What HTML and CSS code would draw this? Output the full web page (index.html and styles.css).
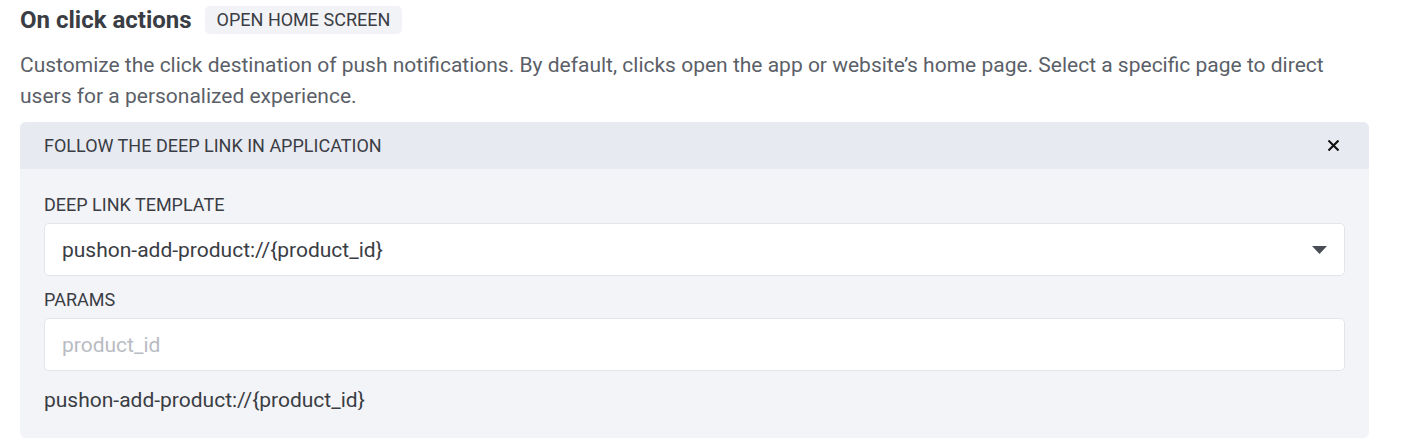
FILE: index.html
```html
<!DOCTYPE html>
<html>
<head>
<meta charset="utf-8">
<link rel="stylesheet" href="styles.css">
</head>
<body>
<div class="page">
  <div class="title-row">
    <h2 class="title">On click actions</h2>
    <span class="tag">OPEN HOME SCREEN</span>
  </div>
  <p class="desc">Customize the click destination of push notifications. By default, clicks open the app or website’s home page. Select a specific page to direct users for a personalized experience.</p>
  <div class="panel">
    <div class="panel-head">
      <span class="panel-title">FOLLOW THE DEEP LINK IN APPLICATION</span>
      <span class="close" aria-label="close">
        <svg width="11" height="11" viewBox="0 0 11 11"><path d="M1.2 1.2 L9.8 9.8 M9.8 1.2 L1.2 9.8" stroke="#111" stroke-width="2.1" stroke-linecap="square"/></svg>
      </span>
    </div>
    <div class="panel-body">
      <div class="label">DEEP LINK TEMPLATE</div>
      <div class="field select">
        <span class="value">pushon-add-product://{product_id}</span>
        <svg class="caret" width="15" height="8" viewBox="0 0 15 8"><path d="M0 0 H15 L7.5 8 Z" fill="#4a4d55"/></svg>
      </div>
      <div class="label label-gap">PARAMS</div>
      <div class="field">
        <span class="placeholder">product_id</span>
      </div>
      <div class="preview">pushon-add-product://{product_id}</div>
    </div>
  </div>
</div>
</body>
</html>
```
FILE: styles.css
```css
* { box-sizing: border-box; }
html, body { margin: 0; padding: 0; background: #fff; }
body { font-family: Roboto, "Noto Sans", Arial, sans-serif; color: #333; }
.page { padding: 6px 38px 0 20px; width: 1407px; }
.title-row { display: flex; align-items: center; gap: 13px; height: 28px; }
.title { margin: 0; font-size: 24px; font-weight: 700; color: #3a3d44; }
.tag { background: #f2f3f7; border-radius: 5px; padding: 0 12px; height: 28px; line-height: 28px; font-size: 18px; color: #3a3d44; font-weight: 400; }
.desc { margin: 16px 0 10px; font-size: 21px; line-height: 31px; color: #5b5f68; }
.panel { width: 1349px; background: #f3f4f8; border-radius: 6px; overflow: hidden; }
.panel-head { display: flex; align-items: center; justify-content: space-between; height: 47px; background: #e8eaf1; padding: 0 30px 0 24px; }
.panel-title { font-size: 18px; color: #3a3d44; }
.close { display: flex; width: 11px; height: 11px; }
.panel-body { padding: 25px 24px 25px 24px; }
.label { font-size: 18px; line-height: 22px; color: #3a3d44; }
.label-gap { margin-top: 13px; }
.field { margin-top: 7px; height: 53px; background: #fff; border: 1px solid #e2e4e9; border-radius: 5px; display: flex; align-items: center; padding: 0 17px; font-size: 21px; }
.select { justify-content: space-between; }
.value { color: #3a3d44; }
.caret { margin-right: 0; }
.placeholder { color: #b9bcc3; }
.preview { margin-top: 16px; font-size: 21px; line-height: 26px; color: #3a3d44; }
```
